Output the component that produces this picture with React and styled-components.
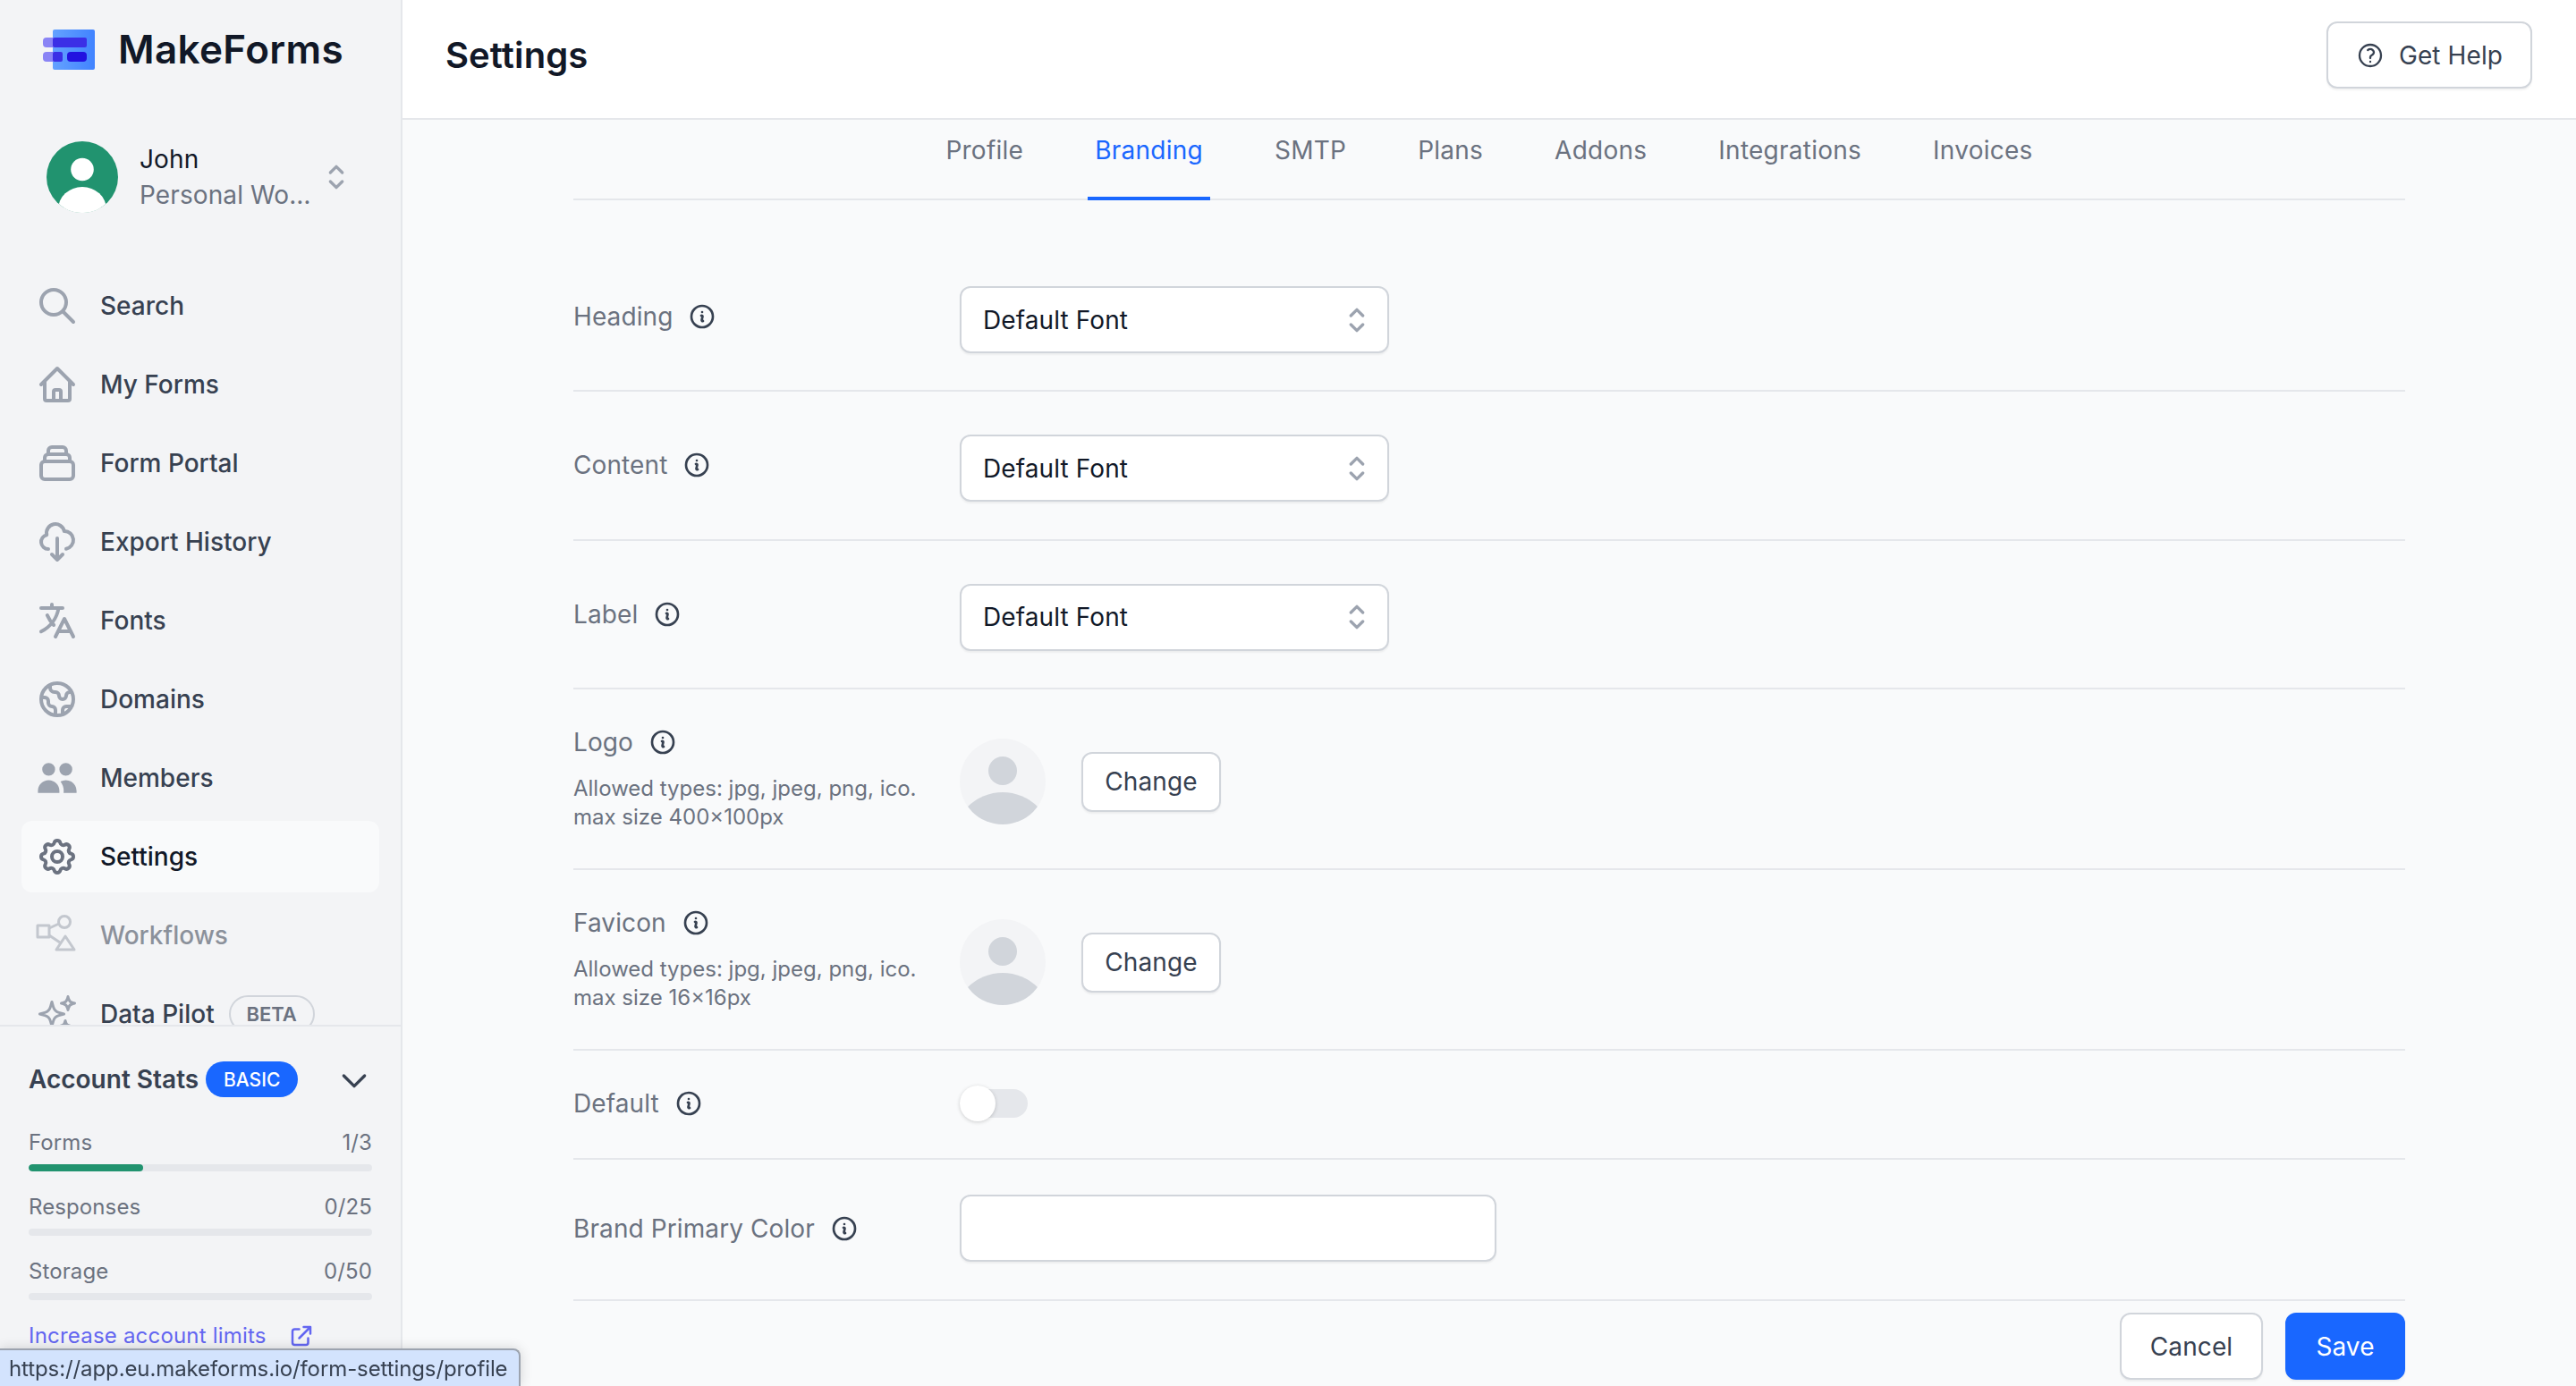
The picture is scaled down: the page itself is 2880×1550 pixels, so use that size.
import React from 'react';
import styled, { createGlobalStyle } from 'styled-components';
import {
  HiOutlineSearch,
  HiOutlineHome,
  HiOutlineCollection,
  HiOutlineCloudDownload,
  HiOutlineTranslate,
  HiOutlineGlobe,
  HiUsers,
  HiOutlineCog,
  HiOutlineSelector,
  HiOutlineChevronDown,
  HiOutlineExternalLink,
} from 'react-icons/hi';
import {
  HiOutlineSparkles,
  HiOutlineInformationCircle,
  HiOutlineQuestionMarkCircle,
} from 'react-icons/hi2';

const GlobalStyle = createGlobalStyle`
  html, body {
    margin: 0;
    height: 100%;
    overflow: hidden;
    background: #f9fafb;
    font-family: Inter, "Liberation Sans", sans-serif;
    letter-spacing: 0.1px;
  }
  * { box-sizing: border-box; }
`;

const Page = styled.div`
  display: flex;
  width: 2880px;
  height: 1550px;
  overflow: hidden;
`;

const Sidebar = styled.aside`
  flex: 0 0 450px;
  height: 100%;
  display: flex;
  flex-direction: column;
  background: #f3f4f6;
  border-right: 2px solid #e5e7eb;
`;

const Brand = styled.div`
  display: flex;
  align-items: center;
  gap: 26px;
  height: 110px;
  padding: 0 0 0 48px;
  font-size: 44px;
  font-weight: 600;
  letter-spacing: 0.35px;
  color: #111827;
`;

const UserRow = styled.div`
  display: flex;
  align-items: center;
  height: 80px;
  margin: 48px 0 0;
  padding-left: 52px;
`;

const UserText = styled.div`
  width: 197px;
  margin-left: 24px;
  margin-right: 3px;
  font-size: 28px;
  line-height: 40px;
  color: #111827;
`;

const UserWorkspace = styled.div`
  color: #6b7280;
  white-space: nowrap;
  overflow: hidden;
  text-overflow: ellipsis;
`;

const UpDown = styled(HiOutlineSelector)`
  flex: 0 0 40px;
  width: 40px;
  height: 40px;
  color: #9ca3af;
`;

const Nav = styled.nav`
  flex: 1;
  min-height: 0;
  overflow: hidden;
  display: flex;
  flex-direction: column;
  gap: 8px;
  padding: 64px 24px 0;
`;

const NavItem = styled.div`
  flex: 0 0 80px;
  display: flex;
  align-items: center;
  gap: 24px;
  padding-left: 16px;
  border-radius: 12px;
  font-size: 28px;
  font-weight: 500;
  letter-spacing: 0;
  color: ${p => (p.$active ? '#111827' : '#374151')};
  background: ${p => (p.$active ? '#f9fafb' : 'transparent')};
  opacity: ${p => (p.$muted ? 0.55 : 1)};

  svg {
    flex: 0 0 48px;
    width: 48px;
    height: 48px;
    color: ${p => (p.$active ? '#6b7280' : '#9ca3af')};
  }
`;

const BetaTag = styled.span`
  display: inline-flex;
  align-items: center;
  justify-content: center;
  width: 96px;
  height: 42px;
  margin-left: -8px;
  border: 2px solid #d1d5db;
  border-radius: 21px;
  font-size: 22px;
  font-weight: 600;
  color: #6b7280;
`;

const Stats = styled.section`
  flex: 0 0 404px;
  padding: 39px 32px 0;
  border-top: 2px solid #e5e7eb;
`;

const StatsHead = styled.div`
  display: flex;
  align-items: center;
  height: 40px;
  margin-bottom: 35px;
  font-size: 28px;
  font-weight: 600;
  letter-spacing: 0;
  color: #374151;

  svg {
    width: 40px;
    height: 40px;
    margin: 2px 0 0 auto;
    color: #374151;
  }
`;

const PlanBadge = styled.span`
  display: inline-flex;
  align-items: center;
  justify-content: center;
  width: 103px;
  height: 40px;
  margin-left: 8px;
  border-radius: 20px;
  background: #1967ff;
  color: #fff;
  font-size: 21px;
  font-weight: 500;
`;

const Stat = styled.div`
  margin-bottom: 24px;
`;

const StatLine = styled.div`
  display: flex;
  justify-content: space-between;
  font-size: 24px;
  line-height: 32px;
  color: #6b7280;
`;

const Track = styled.div`
  height: 8px;
  margin-top: 8px;
  border-radius: 4px;
  background: #e5e7eb;
  overflow: hidden;
`;

const Fill = styled.div`
  height: 100%;
  border-radius: 4px;
  background: #21936f;
`;

const LimitLink = styled.a`
  display: flex;
  align-items: center;
  gap: 24px;
  font-size: 24px;
  line-height: 32px;
  letter-spacing: 0.2px;
  color: #6366f1;

  svg {
    width: 30px;
    height: 30px;
  }
`;

const StatusBubble = styled.div`
  position: fixed;
  left: 0;
  bottom: 0;
  width: 582px;
  height: 42px;
  padding-left: 10px;
  display: flex;
  align-items: center;
  background: #d3e3fd;
  border-top: 2px solid #9ca3af;
  border-right: 2px solid #9ca3af;
  border-top-right-radius: 8px;
  box-shadow: 0 0 14px rgba(0, 0, 0, 0.16);
  font-size: 24px;
  letter-spacing: -0.1px;
  color: #374151;
  white-space: nowrap;
`;

const Main = styled.main`
  flex: 1;
  min-width: 0;
  display: flex;
  flex-direction: column;
`;

const TopBar = styled.header`
  flex: 0 0 134px;
  display: flex;
  align-items: flex-start;
  justify-content: space-between;
  padding: 24px 49px 0 48px;
  background: #fff;
  border-bottom: 2px solid #e5e7eb;
`;

const Title = styled.h1`
  margin: 0;
  font-size: 40px;
  line-height: 75px;
  font-weight: 600;
  color: #111827;
`;

const Button = styled.button`
  display: inline-flex;
  align-items: center;
  justify-content: center;
  gap: ${p => p.$gap || 0}px;
  width: ${p => p.$w}px;
  height: ${p => p.$h || 75}px;
  padding: 0;
  border: 2px solid ${p => (p.$primary ? '#1967ff' : '#d1d5db')};
  border-radius: 12px;
  background: ${p => (p.$primary ? '#1967ff' : '#fff')};
  color: ${p => (p.$primary ? '#fff' : '#374151')};
  box-shadow: 0 2px 2px rgba(0, 0, 0, 0.05);
  font-family: inherit;
  font-size: 28px;
  font-weight: 400;
  letter-spacing: inherit;

  svg {
    width: 32px;
    height: 32px;
    stroke-width: 1.75;
  }
`;

const Content = styled.div`
  width: 2048px;
  margin: 0 auto;
`;

const Tabs = styled.div`
  display: flex;
  justify-content: center;
  gap: 64px;
  height: 90px;
  margin-bottom: 48px;
  border-bottom: 2px solid #e5e7eb;
`;

const Tab = styled.div`
  height: 90px;
  padding: 14px 8px 0;
  border-bottom: 4px solid ${p => (p.$active ? '#1967ff' : 'transparent')};
  font-size: 28px;
  line-height: 40px;
  letter-spacing: 0.25px;
  color: ${p => (p.$active ? '#1967ff' : '#6b7280')};
`;

const Row = styled.div`
  display: flex;
  align-items: ${p => (p.$center ? 'center' : 'flex-start')};
  height: ${p => p.$h || 'auto'};
  padding: ${p => p.$pad || 0};
  border-bottom: 2px solid #e5e7eb;
`;

const LabelCol = styled.div`
  flex: 0 0 432px;
  padding-top: ${p => p.$top || 0}px;
`;

const Label = styled.div`
  display: flex;
  align-items: center;
  gap: 17px;
  font-size: 28px;
  line-height: 40px;
  color: #6b7280;

  svg {
    width: 32px;
    height: 32px;
    stroke-width: 2;
    color: #374151;
  }
`;

const Hint = styled.div`
  margin-top: 16px;
  font-size: 24px;
  line-height: 32px;
  letter-spacing: 0;
  color: #6b7280;
`;

const Select = styled.div`
  display: flex;
  align-items: center;
  justify-content: space-between;
  width: 480px;
  height: 75px;
  padding: 0 14px 0 24px;
  border: 2px solid #d1d5db;
  border-radius: 12px;
  background: #fff;
  box-shadow: 0 2px 2px rgba(0, 0, 0, 0.05);
  font-size: 28px;
  color: #111827;
`;

const ColorField = styled.div`
  width: 600px;
  height: 75px;
  border: 2px solid #d1d5db;
  border-radius: 12px;
  background: #fff;
  box-shadow: 0 2px 2px rgba(0, 0, 0, 0.05);
`;

const UploadBox = styled.div`
  display: flex;
  align-items: center;
  gap: 40px;
  padding-top: 16px;
`;

const Toggle = styled.div`
  display: flex;
  align-items: center;
  width: 76px;
  height: 32px;
  border-radius: 16px;
  background: #e5e7eb;
`;

const Knob = styled.div`
  width: 40px;
  height: 40px;
  border-radius: 50%;
  background: #fff;
  box-shadow: 0 1px 4px rgba(0, 0, 0, 0.18);
`;

const Footer = styled.div`
  display: flex;
  justify-content: flex-end;
  gap: 25px;
  padding-top: 13px;
`;

const LogoMark = () => (
  <svg width="58" height="45" viewBox="0 0 58 45">
    <defs>
      <linearGradient id="mark" x1="0" x2="1" y1="0" y2="0">
        <stop offset="0" stopColor="#64a2ff" />
        <stop offset="1" stopColor="#4183ff" />
      </linearGradient>
    </defs>
    <rect x="11" y="0" width="47" height="45" rx="2" fill="url(#mark)" />
    <rect x="0" y="9" width="49" height="11" rx="4" fill="#8a84f5" />
    <rect x="11" y="9" width="38" height="11" rx="2" fill="#3b2fe6" />
    <rect x="0" y="25" width="22" height="11" rx="4" fill="#8a84f5" />
    <rect x="11" y="25" width="11" height="11" rx="2" fill="#3b2fe6" />
    <rect x="27" y="25" width="22" height="11" rx="4" fill="#2212e0" />
  </svg>
);

const UserAvatar = () => (
  <svg width="80" height="80" viewBox="0 0 80 80" style={{ flex: '0 0 80px' }}>
    <defs>
      <clipPath id="user-clip">
        <circle cx="40" cy="40" r="40" />
      </clipPath>
    </defs>
    <circle cx="40" cy="40" r="40" fill="#21936f" />
    <g clipPath="url(#user-clip)">
      <circle cx="40" cy="31.5" r="12.8" fill="#fff" />
      <ellipse cx="40" cy="76" rx="27" ry="25" fill="#fff" />
      <rect x="13" y="74" width="54" height="8" fill="#fff" />
    </g>
  </svg>
);

const PlaceholderAvatar = ({ id }) => (
  <svg width="96" height="96" viewBox="0 0 96 96">
    <defs>
      <clipPath id={id}>
        <circle cx="48" cy="48" r="48" />
      </clipPath>
    </defs>
    <circle cx="48" cy="48" r="48" fill="#f3f4f6" />
    <g clipPath={`url(#${id})`}>
      <circle cx="48" cy="36" r="16" fill="#d1d5db" />
      <circle cx="48" cy="115.5" r="55.5" fill="#d1d5db" />
    </g>
  </svg>
);

// 48px box, drawn from the reference pixels
const WorkflowIcon = () => (
  <svg viewBox="0 0 48 48" fill="none" stroke="currentColor" strokeWidth="3" strokeLinejoin="round">
    <rect x="2" y="13" width="13" height="13" />
    <circle cx="32" cy="9" r="6.5" />
    <path d="M33 25l-10 15h20z" />
    <path d="M15 16l11-5M15 24l12 8" />
  </svg>
);

const navItems = [
  { label: 'Search', icon: <HiOutlineSearch /> },
  { label: 'My Forms', icon: <HiOutlineHome /> },
  { label: 'Form Portal', icon: <HiOutlineCollection /> },
  { label: 'Export History', icon: <HiOutlineCloudDownload /> },
  { label: 'Fonts', icon: <HiOutlineTranslate /> },
  { label: 'Domains', icon: <HiOutlineGlobe /> },
  { label: 'Members', icon: <HiUsers /> },
  { label: 'Settings', icon: <HiOutlineCog />, active: true },
  { label: 'Workflows', icon: <WorkflowIcon />, muted: true },
  { label: 'Data Pilot', icon: <HiOutlineSparkles />, beta: true },
];

const stats = [
  { label: 'Forms', value: '1/3', pct: 33.3 },
  { label: 'Responses', value: '0/25', pct: 0 },
  { label: 'Storage', value: '0/50', pct: 0 },
];

const tabs = ['Profile', 'Branding', 'SMTP', 'Plans', 'Addons', 'Integrations', 'Invoices'];

const fontRows = ['Heading', 'Content', 'Label'];

const uploads = [
  { label: 'Logo', size: '400×100px' },
  { label: 'Favicon', size: '16×16px' },
];

export default function App() {
  return (
    <Page>
      <GlobalStyle />
      <Sidebar>
        <Brand>
          <LogoMark />
          MakeForms
        </Brand>
        <UserRow>
          <UserAvatar />
          <UserText>
            <div>John</div>
            <UserWorkspace>Personal Workspace</UserWorkspace>
          </UserText>
          <UpDown />
        </UserRow>
        <Nav>
          {navItems.map(item => (
            <NavItem key={item.label} $active={item.active} $muted={item.muted}>
              {item.icon}
              {item.label}
              {item.beta && <BetaTag>BETA</BetaTag>}
            </NavItem>
          ))}
        </Nav>
        <Stats>
          <StatsHead>
            Account Stats
            <PlanBadge>BASIC</PlanBadge>
            <HiOutlineChevronDown />
          </StatsHead>
          {stats.map(stat => (
            <Stat key={stat.label}>
              <StatLine>
                <span>{stat.label}</span>
                <span>{stat.value}</span>
              </StatLine>
              <Track>
                <Fill style={{ width: `${stat.pct}%` }} />
              </Track>
            </Stat>
          ))}
          <LimitLink>
            Increase account limits
            <HiOutlineExternalLink />
          </LimitLink>
        </Stats>
      </Sidebar>

      <Main>
        <TopBar>
          <Title>Settings</Title>
          <Button $w={230} $gap={16}>
            <HiOutlineQuestionMarkCircle />
            Get Help
          </Button>
        </TopBar>
        <Content>
          <Tabs>
            {tabs.map(tab => (
              <Tab key={tab} $active={tab === 'Branding'}>{tab}</Tab>
            ))}
          </Tabs>

          {fontRows.map((name, i) => (
            <Row key={name} $pad={i === 0 ? '48px 0 41px' : '48px 0 41.5px'}>
              <LabelCol $top={14}>
                <Label>
                  {name}
                  <HiOutlineInformationCircle />
                </Label>
              </LabelCol>
              <Select>
                Default Font
                <UpDown />
              </Select>
            </Row>
          ))}

          {uploads.map(item => (
            <Row key={item.label} $pad="39px 0 41px">
              <LabelCol>
                <Label>
                  {item.label}
                  <HiOutlineInformationCircle />
                </Label>
                <Hint>
                  Allowed types: jpg, jpeg, png, ico.
                  <br />
                  max size {item.size}
                </Hint>
              </LabelCol>
              <UploadBox>
                <PlaceholderAvatar id={`ph-${item.label}`} />
                <Button $w={156} $h={67}>Change</Button>
              </UploadBox>
            </Row>
          ))}

          <Row $center $h="122px" $pad="0 0 2px">
            <LabelCol>
              <Label>
                Default
                <HiOutlineInformationCircle />
              </Label>
            </LabelCol>
            <Toggle>
              <Knob />
            </Toggle>
          </Row>

          <Row $center $pad="39px 0 42px">
            <LabelCol>
              <Label>
                Brand Primary Color
                <HiOutlineInformationCircle />
              </Label>
            </LabelCol>
            <ColorField />
          </Row>

          <Footer>
            <Button $w={160}>Cancel</Button>
            <Button $w={134} $primary>Save</Button>
          </Footer>
        </Content>
      </Main>
      <StatusBubble>https://app.eu.makeforms.io/form-settings/profile</StatusBubble>
    </Page>
  );
}
